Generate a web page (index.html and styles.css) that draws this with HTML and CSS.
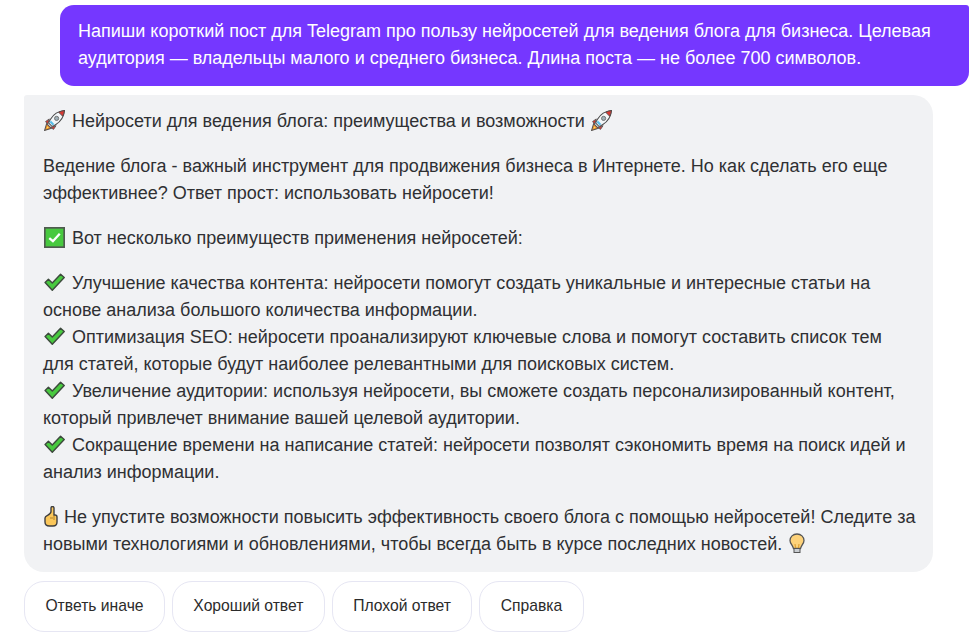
FILE: index.html
```html
<!DOCTYPE html>
<html lang="ru">
<head>
<meta charset="utf-8">
<title>Чат</title>
<link rel="stylesheet" href="styles.css">
</head>
<body>
<svg class="defs" width="0" height="0" aria-hidden="true">
  <defs>
    <symbol id="rocket" viewBox="1 1 20 20">
      <path d="M3.500 14 1.500 20.500 8 18.500 Z" fill="#f5932c" stroke="#555" stroke-width="1"/>
      <path d="M4 16.500 3.500 18.500 5.500 18 Z" fill="#fde05a"/>
      <path d="M6 9.500 2.500 12 4.500 14.500 Z" fill="#d93a34" stroke="#555" stroke-width=".8"/>
      <path d="M12.500 16 10 19.500 7.500 17.500 Z" fill="#d93a34" stroke="#555" stroke-width=".8"/>
      <path d="M20.500 1.500C15 2 10 5 7 10 5.800 12 5.500 13 5.500 13.500L8.500 16.500C9 16.500 10 16.200 12 15 17 12 20 7 20.500 1.500Z" fill="#f3f6f8" stroke="#4a4a4a" stroke-width="1"/>
      <path d="M20.500 1.500C18.500 1.700 16.500 2.300 15 3.200L18.800 7C19.700 5.500 20.300 3.500 20.500 1.500Z" fill="#d93a34" stroke="#4a4a4a" stroke-width=".8"/>
      <circle cx="13" cy="9" r="2" fill="#9fb0b8" stroke="#666" stroke-width=".8"/>
      <path d="M7.500 11 11 14.500 9 15.500 6.500 13Z" fill="#58bde8"/>
    </symbol>
    <symbol id="box" viewBox="0 0 20 20">
      <rect x=".8" y=".8" width="18.400" height="18.400" fill="#48c93f" stroke="#4f5b4f" stroke-width="1.600"/>
      <path d="M5 10.500 8.500 13.500 15 6.500" fill="none" stroke="#fff" stroke-width="2.200"/>
    </symbol>
    <symbol id="check" viewBox="0.500 1 19 19">
      <path d="M1.500 10.500 4.500 7.500 8 11 15.500 3 18.800 6 8 17.500Z" fill="#48c93f" stroke="#3d4a3d" stroke-width="1.300" stroke-linejoin="round"/>
    </symbol>
    <symbol id="finger" viewBox="0 1 14 21">
      <path d="M8.500 1.500C7.500 1.500 7 2.200 7 3V6.500C7 8 5.500 9.300 3.500 10.300 2 11 1 12 1 13V17C1 19.500 3 21 5.500 21H9C11.500 21 13 19.500 13 17V12C13 11 12.500 10 11 10H10V3C10 2 9.500 1.500 8.500 1.500Z" fill="#fbc75a" stroke="#3f3f3f" stroke-width="1.400"/>
      <path d="M10 11V15M6 13H9" stroke="#a87a22" stroke-width=".9" fill="none"/>
    </symbol>
    <symbol id="bulb" viewBox="0 0 16 21">
      <path d="M8 1C4 1 1 3.800 1 7.500 1 10.500 3.500 12 4.500 15.500H11.500C12.500 12 15 10.500 15 7.500 15 3.800 12 1 8 1Z" fill="#fdd27a" stroke="#555" stroke-width="1.300"/>
      <path d="M6.500 15 6 11M9.500 15 10 11" stroke="#d99a2b" stroke-width="1" fill="none"/>
      <rect x="5" y="15.500" width="6" height="4" fill="#c9cdd1" stroke="#555" stroke-width="1"/>
    </symbol>
  </defs>
</svg>
<main class="chat">
  <div class="user-row">
    <div class="user-msg">Напиши короткий пост для Telegram про пользу нейросетей для ведения блога для бизнеса. Целевая аудитория — владельцы малого и среднего бизнеса. Длина поста — не более 700 символов.</div>
  </div>
  <article class="answer">
    <p><svg class="emoji"><use href="#rocket"/></svg> Нейросети для ведения блога: преимущества и возможности <svg class="emoji"><use href="#rocket"/></svg></p>
    <p>Ведение блога - важный инструмент для продвижения бизнеса в Интернете. Но как сделать его еще эффективнее? Ответ прост: использовать нейросети!</p>
    <p><svg class="emoji"><use href="#box"/></svg> Вот несколько преимуществ применения нейросетей:</p>
    <p><svg class="emoji"><use href="#check"/></svg> Улучшение качества контента: нейросети помогут создать уникальные и интересные статьи на основе анализа большого количества информации.<br>
    <svg class="emoji"><use href="#check"/></svg> Оптимизация SEO: нейросети проанализируют ключевые слова и помогут составить список тем для статей, которые будут наиболее релевантными для поисковых систем.<br>
    <svg class="emoji"><use href="#check"/></svg> Увеличение аудитории: используя нейросети, вы сможете создать персонализированный контент, который привлечет внимание вашей целевой аудитории.<br>
    <svg class="emoji"><use href="#check"/></svg> Сокращение времени на написание статей: нейросети позволят сэкономить время на поиск идей и анализ информации.</p>
    <p><svg class="emoji narrow"><use href="#finger"/></svg> Не упустите возможности повысить эффективность своего блога с помощью нейросетей! Следите за новыми технологиями и обновлениями, чтобы всегда быть в курсе последних новостей. <svg class="emoji bulb"><use href="#bulb"/></svg></p>
  </article>
  <div class="actions">
    <button class="action">Ответь иначе</button>
    <button class="action">Хороший ответ</button>
    <button class="action">Плохой ответ</button>
    <button class="action">Справка</button>
  </div>
</main>
</body>
</html>
```
FILE: styles.css
```css
* { box-sizing: border-box; }
html, body { margin: 0; height: 100%; background: #fff; overflow: hidden; }
.defs { position: absolute; }
.chat {
  width: 977px;
  padding: 5px 8px 0 24px;
  font-family: "Liberation Sans", Arial, sans-serif;
  font-size: 18px;
  line-height: 27px;
  display: flex;
  flex-direction: column;
}
.user-row { display: flex; justify-content: flex-end; }
.user-msg {
  width: 909px;
  height: 81px;
  padding: 13px 18px 14px;
  background: #7537ff;
  color: #fff;
  border-radius: 14px 3px 14px 14px;
}
.answer {
  width: 909px;
  margin-top: 9px;
  padding: 13px 17px 14px 19px;
  background: #f1f2f4;
  color: #2f3033;
  border-radius: 3px 20px 20px 20px;
}
.answer p { margin: 0 0 18px; }
.answer p:last-child { margin-bottom: 0; }
.emoji { display: inline-block; width: 21px; height: 21px; margin: 0 2px 0 1px; vertical-align: -4px; }
.emoji.narrow { width: 14px; margin-right: 1px; }
.emoji.bulb { width: 16px; margin-left: 2px; }
.actions { display: flex; gap: 7px; margin-top: 9px; }
.action {
  height: 51px;
  padding: 0 20.4px 2px;
  background: #fff;
  border: 1px solid #e6e6f3;
  border-radius: 20px;
  font: 15.7px "Liberation Sans", Arial, sans-serif;
  color: #2b2b2b;
}
```
